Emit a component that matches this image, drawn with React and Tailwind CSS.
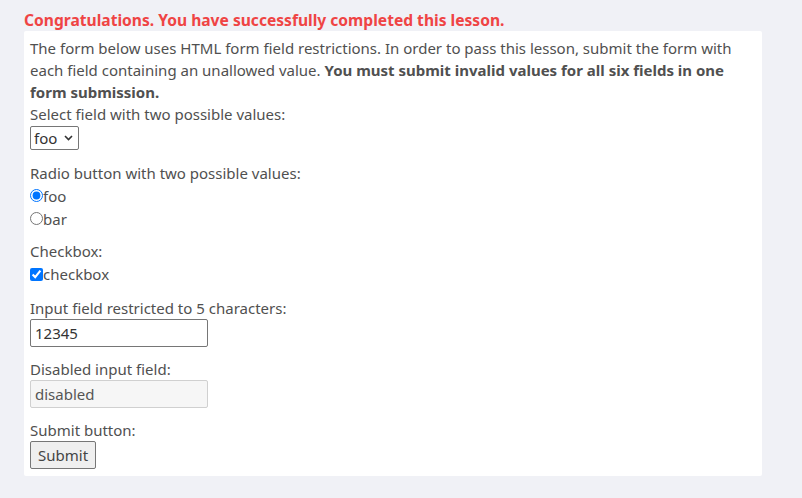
import React from 'react'

const font = { fontFamily: '"Noto Sans", "Open Sans", sans-serif' }

export default function App() {
  return (
    <div className="min-h-[498px] bg-[#f0f1f6] px-[24px] pt-[10px] text-[15px] leading-[22px] text-[#505050]" style={font}>
      <h4 className="font-bold text-[#ef4444] text-[15.6px] leading-[20px]">
        Congratulations. You have successfully completed this lesson.
      </h4>
      <div className="w-[738px] bg-white px-[6px] pt-[6px] pb-[7px] mt-[1px] rounded-[2px]">
        <p>
          The form below uses HTML form field restrictions. In order to pass this lesson, submit the form with
          each field containing an unallowed value. <b>You must submit invalid values for all six fields in one form submission.</b>
        </p>
        <form onSubmit={(e) => e.preventDefault()}>
          <div className="mb-[12px]">
            <div>Select field with two possible values:</div>
            <div className="relative w-[49px] h-[24px] mt-[1px]">
              <select className="appearance-none w-full h-full border border-[#767676] rounded-[2px] pl-[3px] text-[15px] text-[#333] bg-white">
                <option>foo</option>
                <option>bar</option>
              </select>
              <svg className="absolute right-[6px] top-[9px] pointer-events-none" width="9" height="6" viewBox="0 0 9 6">
                <path d="M1 1l3.5 3.5L8 1" stroke="#333" strokeWidth="1.6" fill="none" />
              </svg>
            </div>
          </div>
          <div className="mb-[10px]">
            <div>Radio button with two possible values:</div>
            <label className="flex items-center h-[23px]">
              <input type="radio" name="r" defaultChecked className="m-0 w-[13px] h-[13px] accent-[#0075ff]" />
              <span>foo</span>
            </label>
            <label className="flex items-center h-[23px]">
              <input type="radio" name="r" className="m-0 w-[13px] h-[13px]" />
              <span>bar</span>
            </label>
          </div>
          <div className="mb-[11px]">
            <div>Checkbox:</div>
            <label className="flex items-center h-[24px]">
              <input type="checkbox" defaultChecked className="m-0 w-[13px] h-[13px] accent-[#0075ff]" />
              <span>checkbox</span>
            </label>
          </div>
          <div className="mb-[11px]">
            <div>Input field restricted to 5 characters:</div>
            <input
              type="text"
              maxLength={5}
              defaultValue="12345"
              className="block w-[178px] h-[28px] border border-[#767676] rounded-[2px] px-[4px] text-[15px] text-[#333]"
            />
          </div>
          <div className="mb-[11px]">
            <div>Disabled input field:</div>
            <input
              type="text"
              disabled
              defaultValue="disabled"
              className="block w-[178px] h-[28px] border border-[#d0d0d0] bg-[#f6f6f6] rounded-[2px] px-[4px] text-[15px] text-[#555]"
            />
          </div>
          <div>
            <div>Submit button:</div>
            <button
              type="submit"
              className="block h-[28px] px-[7px] border border-[#767676] bg-[#efefef] rounded-[2px] text-[15px] text-[#444]"
            >
              Submit
            </button>
          </div>
        </form>
      </div>
    </div>
  )
}
